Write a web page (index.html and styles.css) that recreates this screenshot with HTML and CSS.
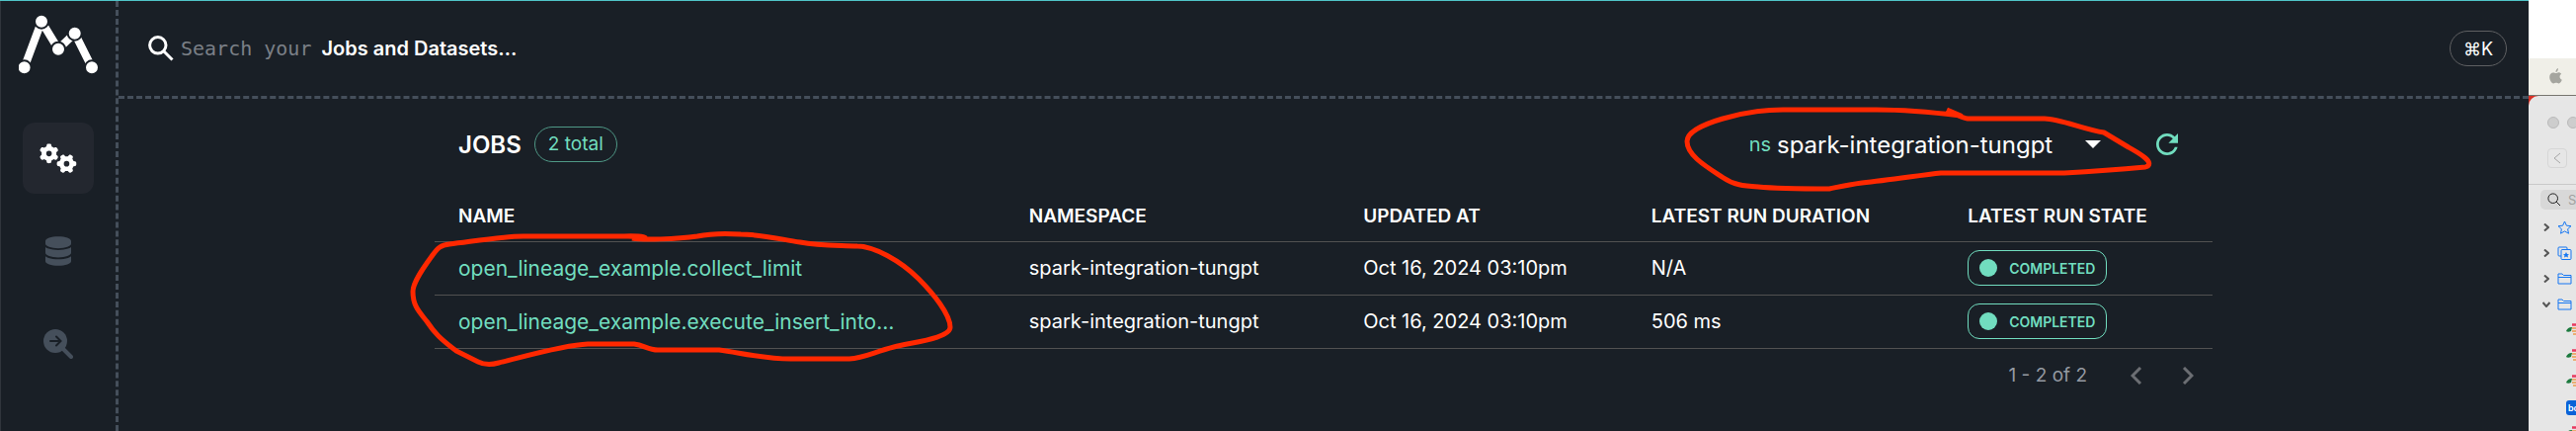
FILE: index.html
```html
<!DOCTYPE html>
<html lang="en">
<head>
<meta charset="utf-8">
<title>Jobs</title>
<link rel="stylesheet" href="styles.css">
</head>
<body>
<div class="screen">
  <div class="app">
    <nav class="sidebar" aria-label="Main">
      <a class="logo" href="#" aria-label="Home">
        <svg width="80" height="62" viewBox="0 0 80 62">
          <path class="logo-edge" d="M5.600 53.300L23 6.700L40 34.700L56.700 18.700L74 53.300"/>
          <g class="logo-node"><circle cx="5.600" cy="53.300" r="7"/><circle cx="23" cy="6.700" r="7"/><circle cx="40" cy="34.700" r="7"/><circle cx="56.700" cy="18.700" r="7"/><circle cx="74" cy="53.300" r="7"/></g>
        </svg>
      </a>
      <div class="nav">
        <button class="nav-item nav-item-active" type="button" aria-label="Jobs">
          <svg width="38" height="30" viewBox="0 0 640 512" fill="currentColor"><path d="M308.500 135.300c7.100-6.300 9.900-16.200 6.200-25c-2.300-5.300-4.800-10.500-7.600-15.500L304 89.400c-3-5-6.300-9.900-9.800-14.600c-5.700-7.600-15.700-10.100-24.700-7.100l-28.200 9.300c-10.700-8.800-23-16-36.200-20.900L199 27.100c-1.900-9.300-9.100-16.700-18.500-17.800C173.900 8.400 167.200 8 160.400 8h-.7c-6.800 0-13.500 .4-20.100 1.200c-9.400 1.100-16.600 8.600-18.500 17.800L115 56.100c-13.300 5-25.500 12.100-36.200 20.900L50.500 67.800c-9-3-19-.5-24.700 7.100c-3.500 4.700-6.800 9.600-9.900 14.600l-3 5.300c-2.800 5-5.300 10.200-7.600 15.600c-3.700 8.700-.9 18.600 6.200 25l22.200 19.800C32.600 161.900 32 168.900 32 176s.6 14.100 1.700 20.900L11.500 216.700c-7.100 6.300-9.900 16.200-6.200 25c2.300 5.300 4.800 10.500 7.600 15.600l3 5.200c3 5.100 6.300 9.900 9.900 14.600c5.700 7.600 15.700 10.100 24.700 7.100l28.200-9.300c10.700 8.800 23 16 36.200 20.900l6.100 29.100c1.900 9.300 9.100 16.700 18.500 17.800c6.700 .8 13.500 1.200 20.400 1.200s13.700-.4 20.400-1.200c9.400-1.100 16.600-8.600 18.500-17.800l6.100-29.100c13.300-5 25.500-12.100 36.200-20.900l28.200 9.300c9 3 19 .5 24.700-7.100c3.500-4.700 6.800-9.500 9.800-14.600l3.100-5.400c2.800-5 5.300-10.200 7.600-15.500c3.700-8.700 .9-18.600-6.200-25l-22.200-19.800c1.100-6.800 1.700-13.800 1.700-20.900s-.6-14.100-1.700-20.900l22.200-19.800zM112 176a48 48 0 1 1 96 0a48 48 0 1 1-96 0zM504.700 500.500c6.300 7.100 16.200 9.900 25 6.200c5.300-2.300 10.500-4.800 15.500-7.600l5.400-3.100c5-3 9.900-6.300 14.600-9.800c7.600-5.700 10.100-15.700 7.100-24.700l-9.300-28.200c8.800-10.700 16-23 20.900-36.200l29.100-6.100c9.300-1.900 16.700-9.100 17.800-18.500c.8-6.700 1.200-13.500 1.200-20.400s-.4-13.700-1.200-20.400c-1.100-9.400-8.600-16.600-17.800-18.500L583.900 307c-5-13.300-12.100-25.500-20.900-36.200l9.300-28.200c3-9 .5-19-7.100-24.700c-4.700-3.500-9.600-6.800-14.600-9.900l-5.300-3c-5-2.800-10.200-5.300-15.600-7.600c-8.700-3.700-18.600-.9-25 6.200l-19.800 22.200c-6.800-1.100-13.800-1.700-20.900-1.700s-14.100 .6-20.900 1.700l-19.800-22.200c-6.300-7.100-16.200-9.900-25-6.200c-5.300 2.300-10.500 4.800-15.600 7.600l-5.200 3c-5.100 3-9.900 6.300-14.600 9.900c-7.600 5.700-10.100 15.700-7.100 24.700l9.300 28.200c-8.800 10.700-16 23-20.900 36.200L315.100 313c-9.300 1.900-16.700 9.100-17.800 18.500c-.8 6.700-1.200 13.500-1.200 20.400s.4 13.700 1.200 20.400c1.100 9.400 8.600 16.600 17.800 18.500l29.100 6.100c5 13.300 12.100 25.500 20.900 36.200l-9.300 28.200c-3 9-.5 19 7.100 24.700c4.700 3.500 9.500 6.800 14.600 9.800l5.400 3.100c5 2.800 10.200 5.300 15.500 7.600c8.700 3.700 18.600 .9 25-6.200l19.800-22.200c6.800 1.100 13.800 1.700 20.900 1.700s14.100-.6 20.900-1.700l19.800 22.200zM464 304a48 48 0 1 1 0 96a48 48 0 1 1 0-96z"/></svg>
        </button>
        <button class="nav-item" type="button" aria-label="Datasets">
          <svg width="26" height="30" viewBox="0 0 448 512" fill="currentColor"><path d="M448 80v48c0 44.200-100.300 80-224 80S0 172.200 0 128V80C0 35.800 100.300 0 224 0S448 35.800 448 80zM393.200 214.700c20.800-7.400 39.900-16.900 54.800-28.600V288c0 44.200-100.300 80-224 80S0 332.200 0 288V186.100c14.900 11.800 34 21.200 54.800 28.600C99.700 230.700 159.500 240 224 240s124.300-9.300 169.200-25.300zM0 346.100c14.900 11.800 34 21.200 54.800 28.600C99.700 390.700 159.500 400 224 400s124.300-9.300 169.200-25.300c20.800-7.400 39.900-16.900 54.800-28.600V432c0 44.200-100.300 80-224 80S0 476.200 0 432V346.100z"/></svg>
        </button>
        <button class="nav-item" type="button" aria-label="Events">
          <svg width="30" height="30" viewBox="0 0 30 30"><circle cx="12" cy="12" r="12" fill="currentColor"/><path d="M20 20L28 28" stroke="currentColor" stroke-width="4" stroke-linecap="round"/><path class="nav-arrow" d="M7 12H17M13 7.500L17.500 12L13 16.500"/></svg>
        </button>
      </div>
    </nav>
    <div class="main">
      <header class="topbar">
        <svg class="search-icon" width="26" height="26" viewBox="0 0 26 26"><circle cx="9.800" cy="9.800" r="8.200"/><path d="M15.500 15.500L24.500 24.500"/></svg>
        <label class="search-label" for="search"><span class="search-hint">Search your</span><b>Jobs and Datasets…</b></label>
        <input class="search-input" id="search" type="text">
        <kbd class="shortcut">⌘K</kbd>
      </header>
      <main class="content">
        <div class="title-row">
          <h1 class="title">JOBS</h1>
          <span class="count">2 total</span>
          <label class="ns-label" for="ns">ns</label>
          <span class="ns-field">
            <select class="ns-select" id="ns"><option>spark-integration-tungpt</option></select>
            <svg class="ns-caret" width="16" height="8" viewBox="0 0 16 8"><path d="M0 0H16L8 8Z" fill="#fff"/></svg>
          </span>
          <button class="refresh" type="button" aria-label="Refresh">
            <svg width="22" height="22" viewBox="4 4 16 16" fill="currentColor"><path d="M17.650 6.350C16.200 4.900 14.210 4 12 4c-4.420 0-7.990 3.580-7.990 8s3.570 8 7.990 8c3.730 0 6.840-2.550 7.730-6h-2.080c-.82 2.330-3.040 4-5.650 4-3.310 0-6-2.690-6-6s2.690-6 6-6c1.660 0 3.140.69 4.220 1.780L13 11h7V4l-2.350 2.350z"/></svg>
          </button>
        </div>
        <table class="jobs">
          <colgroup><col class="c-name"><col class="c-ns"><col class="c-upd"><col class="c-dur"><col class="c-state"></colgroup>
          <thead><tr><th>NAME</th><th>NAMESPACE</th><th>UPDATED AT</th><th>LATEST RUN DURATION</th><th>LATEST RUN STATE</th></tr></thead>
          <tbody>
            <tr><td><a href="#">open_lineage_example.collect_limit</a></td><td>spark-integration-tungpt</td><td>Oct 16, 2024 03:10pm</td><td>N/A</td><td><span class="state"><i class="dot"></i>COMPLETED</span></td></tr>
            <tr><td><a href="#">open_lineage_example.execute_insert_into…</a></td><td>spark-integration-tungpt</td><td>Oct 16, 2024 03:10pm</td><td>506 ms</td><td><span class="state"><i class="dot"></i>COMPLETED</span></td></tr>
          </tbody>
        </table>
        <div class="pager">
          <span>1 - 2 of 2</span>
          <button type="button" aria-label="Previous page"><svg width="12" height="18" viewBox="0 0 12 18"><path d="M10 1L2 9L10 17"/></svg></button>
          <button type="button" aria-label="Next page"><svg width="12" height="18" viewBox="0 0 12 18"><path d="M2 1L10 9L2 17"/></svg></button>
        </div>
      </main>
    </div>
    <svg class="marks" width="2560" height="436" viewBox="0 0 2560 436">
      <path d="M654 241C650 238 640 239 620 239H530C510 239 480 244 455 247C446 248 443 251 438 258C430 269 418 285 418 295C418 310 425 316 432 325C440 337 446 343 462 355L484 366C490 369 498 369 505 367C530 361 570 349 595 348H642C652 349 656 354 666 354H728C750 357 775 363 800 363H860C875 362 885 356 905 351C925 346 962 342 962 331C962 318 945 297 930 282C912 264 885 249 868 249C850 248 830 249 810 245C790 242 770 237 750 237C735 236 720 236 706 239C685 242 650 243 640 241"/>
      <path d="M1971 111L1985 117C1960 114 1930 111 1900 111H1805C1770 111 1708 125 1708 143C1708 158 1730 170 1745 180C1755 187 1765 188 1780 189C1800 191 1830 191 1852 191C1862 189 1870 187 1885 185C1915 182 1945 177 1965 175H2090C2125 173 2150 171 2172 169C2184 165 2164 154 2155 149L2130 134C2110 131 2085 120 2070 120H1992C1985 119 1980 115 1971 113"/>
    </svg>
  </div>
  <aside class="desktop">
    <svg width="0" height="0">
      <symbol id="bee" viewBox="0 0 18 14"><path d="M0 8C1 5 4 3.500 6 4L5 8C3 9 1 9 0 8Z" fill="#1c7a3e"/><path d="M6 1.500H18" stroke="#e8395f" stroke-width="2.500"/><path d="M6 5H18M6 8H18M7 11H17" stroke="#ee9a4d" stroke-width="1.500"/></symbol>
    </svg>
    <div class="menubar">
      <svg width="13" height="16" viewBox="0 0 13 16" fill="#a5a59f"><path d="M9 0C9 2 8 4 6.500 4C6.300 2.200 7.500 .6 9 0ZM9.300 4.300C10.500 4.300 11.600 5 12.200 5.800C9.700 7.300 10.200 10.700 12.800 11.700C12.200 13.400 10.900 15.400 9.600 15.400C8.500 15.400 8.200 14.800 6.900 14.800C5.600 14.800 5.100 15.400 4.200 15.400C2.300 15.400 .2 12 .2 9C.2 6 2 4.400 3.900 4.400C5.100 4.400 6 5.100 6.800 5.100C7.500 5.100 8.300 4.300 9.300 4.300Z"/></svg>
    </div>
    <div class="finder-back">
    <div class="finder">
      <div class="lights"><i></i><i></i></div>
      <button class="back" type="button" aria-label="Back"><svg width="8" height="12" viewBox="0 0 8 12"><path d="M7 1L1 6L7 11"/></svg></button>
      <div class="finder-body">
        <div class="finder-search">
          <svg width="14" height="14" viewBox="0 0 14 14"><circle cx="5.700" cy="5.700" r="4.800"/><path d="M9.200 9.200L13 13"/></svg>
          <input type="text" placeholder="Search" aria-label="Search files">
        </div>
        <div class="item"><svg class="chev" width="6" height="8" viewBox="0 0 6 8"><path d="M1 0.500L5 4L1 7.500"/></svg><svg width="15" height="14" viewBox="0 0 15 14"><path d="M7.500 1L9.400 5.200L14 5.700L10.600 8.700L11.500 13.200L7.500 10.900L3.500 13.200L4.400 8.700L1 5.700L5.600 5.200Z"/></svg></div>
        <div class="item"><svg class="chev" width="6" height="8" viewBox="0 0 6 8"><path d="M1 0.500L5 4L1 7.500"/></svg><svg width="15" height="14" viewBox="0 0 15 14"><path d="M4 10H2Q1 10 1 9V2Q1 1 2 1H9Q10 1 10 2V3.500"/><rect x="4" y="3.500" width="10" height="10" rx="1"/><path d="M9 6L10 8L12 8.200L10.500 9.500L11 11.500L9 10.500L7 11.500L7.500 9.500L6 8.200L8 8Z" fill="#1677f2" stroke="none"/></svg></div>
        <div class="item"><svg class="chev" width="6" height="8" viewBox="0 0 6 8"><path d="M1 0.500L5 4L1 7.500"/></svg><svg width="15" height="14" viewBox="0 0 15 14"><path d="M1 12V2H5L6.500 3.500H14V12ZM1 5.500H14"/></svg></div>
        <div class="item item-open"><svg class="chev" width="8" height="6" viewBox="0 0 8 6"><path d="M0.500 1L4 5L7.500 1"/></svg><svg width="15" height="14" viewBox="0 0 15 14"><path d="M1 12V2H5L6.500 3.500H14V12ZM1 5.500H14"/></svg></div>
        <div class="item item-file"><svg width="18" height="14"><use href="#bee"/></svg></div>
        <div class="item item-file"><svg width="18" height="14"><use href="#bee"/></svg></div>
        <div class="item item-file"><svg width="18" height="14"><use href="#bee"/></svg></div>
        <div class="item item-file"><span class="box">box</span></div>
        <div class="item item-file"><svg width="18" height="14"><use href="#bee"/></svg></div>
      </div>
    </div>
    </div>
  </aside>
</div>
</body>
</html>
```
FILE: styles.css
```css
* { box-sizing: border-box; }
body { margin: 0; font-family: Inter, "Liberation Sans", sans-serif; font-size: 20px; color: #fff; overflow: hidden; }
button { border: 0; background: none; padding: 0; color: inherit; font: inherit; }
svg { display: block; flex: none; }
.screen { display: flex; height: 100vh; }
.app { position: relative; flex: 1; display: flex; background: #191f26; border-top: 1px solid #4fc3c7; }
.sidebar { width: 120px; border-right: 3px dashed #454f5b; border-left: 1px solid #30353c; padding-top: 14px; display: flex; flex-direction: column; align-items: center; }
.logo-edge { fill: none; stroke: #fff; stroke-width: 8; }
.logo-node { fill: #fff; stroke: #191f26; stroke-width: 2; }
.nav { display: flex; flex-direction: column; gap: 22px; margin-top: 47px; }
.nav-item { width: 72px; height: 72px; border-radius: 12px; display: flex; align-items: center; justify-content: center; color: #454f5b; }
.nav-item-active { background: #23272f; color: #fff; }
.nav-arrow { fill: none; stroke: #191f26; stroke-width: 2; stroke-linecap: round; }
.main { flex: 1; display: flex; flex-direction: column; }
.topbar { height: 99px; border-bottom: 3px dashed #454f5b; padding: 0 22px 0 30px; display: flex; align-items: center; }
.search-icon { fill: none; stroke: #fff; stroke-width: 3; }
.search-label { display: flex; align-items: baseline; gap: 10px; margin-left: 7px; }
.search-hint { font-family: "DejaVu Sans Mono", monospace; color: #7b8087; }
.search-label b { font-weight: 600; }
.search-input { flex: 1; background: none; border: 0; outline: 0; color: #fff; font: inherit; }
.shortcut { width: 58px; height: 36px; border: 1px solid #5f6062; border-radius: 18px; display: flex; align-items: center; justify-content: center; font: inherit; font-size: 18px; }
.content { width: 1800px; max-width: 100%; margin: 0 auto; padding-top: 26px; }
.title-row { display: flex; align-items: center; padding: 0 35px 0 24px; height: 40px; }
.title { margin: 0; font-size: 24px; font-weight: 600; }
.count { height: 36px; margin-left: 13px; padding: 0 13px; border: 1px solid #4f9886; border-radius: 18px; color: #71ddbf; font-size: 19px; line-height: 34px; }
.ns-label { margin-left: auto; color: #71ddbf; }
.ns-field { display: flex; align-items: center; margin-left: 6px; }
.ns-select { appearance: none; width: 328px; border: 0; background: none; color: #fff; font: inherit; font-size: 24px; padding: 0; }
.ns-caret { margin-left: -16px; }
.refresh { margin-left: 56px; color: #71ddbf; }
.jobs { width: 100%; table-layout: fixed; border-collapse: collapse; margin-top: 24px; }
.c-name { width: 32.1%; } .c-ns { width: 18.8%; } .c-upd { width: 16.2%; } .c-dur { width: 17.8%; }
.jobs th, .jobs td { text-align: left; padding: 0 24px; height: 54px; border-bottom: 1px solid #515151; white-space: nowrap; }
.jobs th { font-size: 19px; font-weight: 600; padding-top: 4px; }
.jobs a { color: #71ddbf; text-decoration: none; font-size: 21px; }
.state { display: inline-flex; align-items: center; height: 36px; border: 1px solid #71ddbf; border-radius: 12px; padding: 0 11px; color: #71ddbf; font-size: 14px; font-weight: 600; vertical-align: middle; }
.dot { width: 18px; height: 18px; border-radius: 50%; background: #71ddbf; margin-right: 12px; }
.pager { display: flex; justify-content: flex-end; align-items: center; color: #959aa2; height: 54px; gap: 40px; padding-right: 19px; font-size: 19px; }
.pager span { margin-right: 4px; }
.pager svg { fill: none; stroke: #6b6e73; stroke-width: 3; }
.marks { position: absolute; left: 0; top: -1px; fill: none; stroke: #ff2800; stroke-width: 5; stroke-linejoin: round; pointer-events: none; }
.desktop { width: 48px; background: #fff; padding-top: 59px; overflow: hidden; }
.menubar { height: 38px; background: #f0efe8; border-bottom: 1px solid #77756f; padding: 10px 21px; }
.finder-back { background: #d93025; }
.finder { background: #e6e6e6; border-radius: 10px 0 0 0; padding-top: 21px; }
.lights { display: flex; gap: 8px; padding-left: 19px; }
.lights i { flex: none; width: 12px; height: 12px; border-radius: 50%; background: #cdcdcd; border: 1px solid #bababa; }
.back { width: 20px; height: 20px; border: 1px solid #d6d6d6; border-radius: 4px; margin: 20px 0 16px 19px; display: flex; align-items: center; justify-content: center; }
.back svg { fill: none; stroke: #a5a5a5; stroke-width: 1; }
.finder-body { border-top: 1px solid #c9c9c9; padding: 5px 0 0 12px; }
.finder-search { width: 100px; height: 20px; background: #d8d8d8; border-radius: 5px; display: flex; align-items: center; padding-left: 7px; gap: 7px; margin-bottom: 5px; }
.finder-search svg { fill: none; stroke: #222; stroke-width: 1; }
.finder-search input { flex: 1; min-width: 0; border: 0; background: none; padding: 0; font: 13px Inter, sans-serif; }
.finder-search input::placeholder { color: #a0a0a0; }
.item { display: flex; align-items: center; gap: 8px; height: 26px; padding-left: 3px; fill: none; stroke: #1677f2; stroke-width: 1; }
.item-open { gap: 7px; padding-left: 2px; }
.item-file { padding-left: 26px; stroke: none; }
.chev { stroke: #555; stroke-width: 2; }
.box { flex: none; width: 20px; height: 15px; border-radius: 3px; background: #0a62d8; color: #fff; font-size: 9px; line-height: 15px; font-weight: 600; text-align: center; }
```
